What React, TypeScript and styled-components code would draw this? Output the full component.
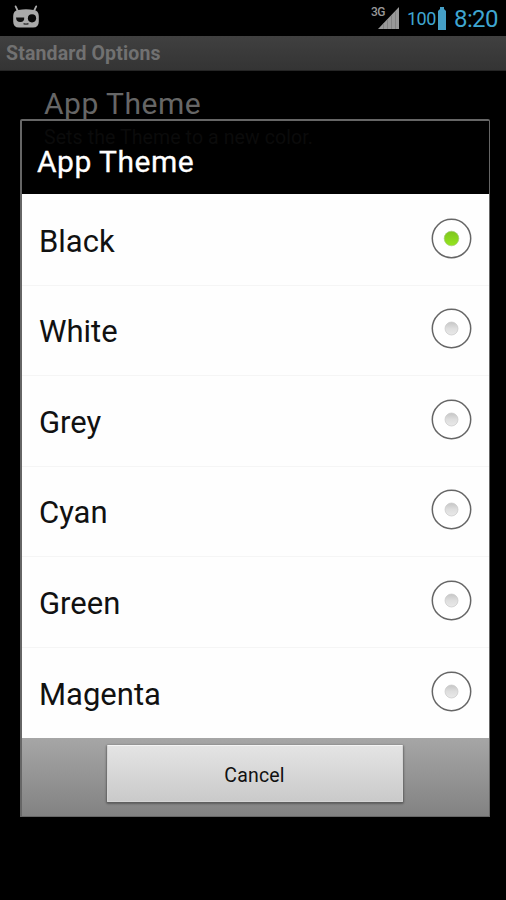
import React, { useState } from "react";
import styled, { createGlobalStyle } from "styled-components";

const GlobalStyle = createGlobalStyle`
  * { box-sizing: border-box; }
  html, body { margin: 0; background: #000; }
  body, button { font-family: Roboto, "Liberation Sans", sans-serif; }
`;

const Screen = styled.div`
  position: relative;
  width: 506px;
  height: 900px;
  overflow: hidden;
  background: #000;
`;

const StatusBar = styled.header`
  display: flex;
  align-items: center;
  justify-content: space-between;
  height: 36px;
  padding: 0 8px 0 12px;
  color: #3fa6d1;
`;

const StatusIcons = styled.div`
  display: flex;
  align-items: center;
`;

const BatteryLevel = styled.span`
  margin-left: 8px;
  width: 31px;
  padding-top: 2px;
  font-size: 18px;
  line-height: 34px;
  letter-spacing: -0.5px;
`;

const Clock = styled.span`
  margin-left: 8px;
  width: 44px;
  padding-top: 2px;
  font-size: 24px;
  line-height: 34px;
  letter-spacing: -0.6px;
  white-space: nowrap;
`;

const TitleBar = styled.div`
  height: 35px;
  padding-left: 6px;
  background: linear-gradient(#404040, #343434);
  border-bottom: 1px solid #252525;
  color: #717171;
  font-size: 19.5px;
  font-weight: 700;
  line-height: 36px;
  letter-spacing: 0.15px;
`;

const Preference = styled.section`
  padding: 14px 0 0 44px;
`;

const PreferenceTitle = styled.div`
  color: #666;
  font-size: 30px;
  line-height: 38px;
  letter-spacing: 0.5px;
`;

const PreferenceSummary = styled.div`
  color: #0b0b0b;
  font-size: 19.5px;
  line-height: 24px;
  margin-top: 3px;
  letter-spacing: 0.1px;
`;

const Dialog = styled.section`
  position: absolute;
  left: 20px;
  top: 119px;
  width: 470px;
  height: 698px;
  display: flex;
  flex-direction: column;
  border: solid #666;
  border-width: 2px 1px 1px 2px;
  border-radius: 2px 2px 0 0;
`;

const DialogTitle = styled.h1`
  flex: none;
  height: 73px;
  margin: 0;
  padding: 5px 0 0 15px;
  color: #fff;
  font-size: 30px;
  font-weight: 400;
  line-height: 72px;
  letter-spacing: 0.5px;
  -webkit-text-stroke: 0.3px #fff;
`;

const OptionList = styled.div`
  display: grid;
  grid-template-rows: repeat(6, 1fr);
  height: 544px;
  padding-top: 1px;
  background: #fefefe;
`;

const Option = styled.div`
  display: flex;
  align-items: center;
  justify-content: space-between;
  padding: 0 17px;
  border-bottom: 1px solid #f5f5f5;
  color: #111;
  cursor: pointer;
  &:last-child { border-bottom: 0; }
`;

const OptionLabel = styled.span`
  padding-top: 4px;
  font-size: 31px;
  line-height: 40px;
`;

const RadioIcon = styled.svg`
  display: block;
  margin-top: -3px;
`;

const ButtonBar = styled.footer`
  flex: 1;
  display: flex;
  justify-content: center;
  align-items: flex-start;
  padding: 7px 2px 0 0;
  background: linear-gradient(#a6a6a6, #828282);
`;

const CancelButton = styled.button`
  width: 296px;
  height: 57px;
  padding: 3px 0 0;
  border: 1px solid #d4d4d4;
  border-top-color: #f4f4f4;
  border-radius: 1px;
  background: linear-gradient(#e4e4e4, #cacaca);
  box-shadow: 0 1px 2px 1px rgba(0, 0, 0, 0.32);
  color: #111;
  font-size: 19.5px;
  letter-spacing: 0.15px;
`;

const Mascot = () => (
  <svg width="28" height="28" viewBox="0 0 28 28">
    <path d="M3.6 2.4 5.8 7M24.2 2.4 22 7" stroke="#aaa" strokeWidth="1.8" strokeLinecap="round" fill="none" />
    <path d="M6.5 5.9Q14 4.4 21.5 5.9Q26.8 6.5 26.8 12V17.5Q26.8 23.6 21 23.6H7Q1.2 23.6 1.2 17.5V12Q1.2 6.5 6.5 5.9Z" fill="#aaa" />
    <circle cx="20" cy="14.3" r="4.1" fill="#090909" />
    <path d="M4 13.4H12.2Q12.6 17.8 8.5 18Q4.4 18.2 4 13.4Z" fill="#111" />
    <path d="M11.5 19.6Q14 20.6 16.5 19.6" stroke="#333" strokeWidth="1.3" fill="none" />
  </svg>
);

const NetworkLabel = styled.span`
  align-self: flex-start;
  width: 14px;
  margin: -1px -7px 0 -1px;
  color: #999;
  font-size: 12px;
  font-weight: 500;
  line-height: 12px;
  letter-spacing: -0.6px;
`;

const Signal = () => (
  <svg width="21" height="22" viewBox="0 0 21 22">
    <path d="M0 22 21 0V22Z" fill="#999" />
    <path d="M5.5 16.5V22M9.5 12.5V22M13.5 8.5V22M17.5 4.5V22" stroke="#838383" />
  </svg>
);

const Battery = () => (
  <svg width="8" height="23" viewBox="0 0 8 23">
    <path d="M2 0H6V2L8 4V23H0V4L2 2Z" fill="#459fc6" />
  </svg>
);

const Radio = ({ checked }: { checked: boolean }) => (
  <RadioIcon width="41" height="41" viewBox="0 0 41 41">
    <defs>
      <linearGradient id="checkedDot" x2="0" y2="1">
        <stop stopColor="#7ec61e" />
        <stop offset="1" stopColor="#95e51f" />
      </linearGradient>
      <linearGradient id="emptyDot" x2="0" y2="1">
        <stop stopColor="#c6c6c6" />
        <stop offset=".5" stopColor="#dedede" />
        <stop offset="1" stopColor="#e9e9e9" />
      </linearGradient>
    </defs>
    <circle cx="20.5" cy="20.5" r="19.2" fill="#fff" stroke="#666" strokeWidth="1.5" />
    <circle
      cx="20.5"
      cy="20.5"
      r={checked ? 7.3 : 6.5}
      fill={checked ? "url(#checkedDot)" : "url(#emptyDot)"}
      stroke={checked ? "#a4c978" : "#c8c8c8"}
      strokeWidth=".7"
    />
  </RadioIcon>
);

const themes = ["Black", "White", "Grey", "Cyan", "Green", "Magenta"];

export default function App() {
  const [selected, setSelected] = useState("Black");
  return (
    <>
      <GlobalStyle />
      <Screen>
        <StatusBar>
          <Mascot />
          <StatusIcons>
            <StatusIcons>
              <NetworkLabel>3G</NetworkLabel>
              <Signal />
            </StatusIcons>
            <BatteryLevel>100</BatteryLevel>
            <Battery />
            <Clock>8:20</Clock>
          </StatusIcons>
        </StatusBar>
        <TitleBar>Standard Options</TitleBar>
        <Preference>
          <PreferenceTitle>App Theme</PreferenceTitle>
          <PreferenceSummary>Sets the Theme to a new color.</PreferenceSummary>
        </Preference>
        <Dialog role="dialog" aria-label="App Theme">
          <DialogTitle>App Theme</DialogTitle>
          <OptionList role="radiogroup">
            {themes.map((theme) => (
              <Option key={theme} role="radio" aria-checked={selected === theme} onClick={() => setSelected(theme)}>
                <OptionLabel>{theme}</OptionLabel>
                <Radio checked={selected === theme} />
              </Option>
            ))}
          </OptionList>
          <ButtonBar>
            <CancelButton>Cancel</CancelButton>
          </ButtonBar>
        </Dialog>
      </Screen>
    </>
  );
}
